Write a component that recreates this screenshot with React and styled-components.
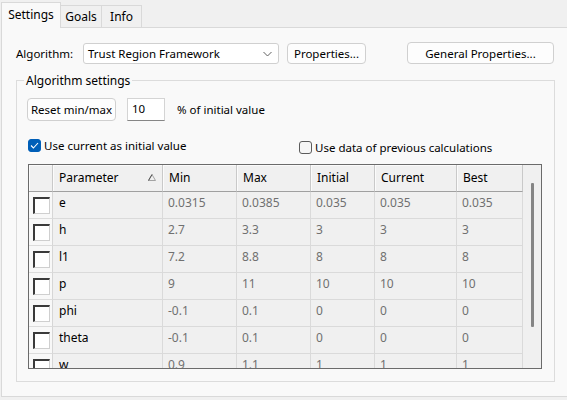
import styled, { createGlobalStyle } from "styled-components";

const GlobalStyle = createGlobalStyle`
  html, body {
    margin: 0;
    padding: 0;
    background: #f0f0f0;
  }
  body {
    font-family: "Noto Sans", "Open Sans", sans-serif;
    font-size: 11.5px;
    color: #000;
  }
`;

const Window = styled.div`
  width: 567px;
  height: 400px;
  overflow: hidden;
  background: #f0f0f0;
  padding: 2px 0 0 1px;
  box-sizing: border-box;
`;

const TabBar = styled.div`
  display: flex;
  align-items: flex-end;
  height: 25px;
`;

const Tab = styled.div`
  position: relative;
  box-sizing: border-box;
  display: flex;
  align-items: center;
  justify-content: center;
  width: ${(p) => p.w}px;
  height: ${(p) => (p.active ? 26 : 22)}px;
  margin-bottom: ${(p) => (p.active ? -1 : 0)}px;
  z-index: ${(p) => (p.active ? 1 : 0)};
  background: ${(p) => (p.active ? "#f9f9f9" : "#f0f0f0")};
  border: 1px solid #d9d9d9;
  border-bottom: none;
  border-left: ${(p) => (p.first ? "1px solid #d9d9d9" : "none")};
  padding-bottom: ${(p) => (p.active ? 3 : 0)}px;
  font-size: 12px;
`;

const Panel = styled.div`
  box-sizing: border-box;
  height: 370px;
  width: 580px;
  background: #f9f9f9;
  border: 1px solid #d9d9d9;
  padding: 14px 0 0 14px;
`;

const TopRow = styled.div`
  display: flex;
  align-items: center;
  height: 22px;
`;

const Label = styled.span`
  width: 67px;
  white-space: nowrap;
`;

const Select = styled.div`
  box-sizing: border-box;
  width: 196px;
  height: 21px;
  margin-top: 1px;
  background: #fff;
  border: 1px solid #d0d0d0;
  border-radius: 3px;
  display: flex;
  align-items: center;
  justify-content: space-between;
  padding: 0 6px 0 4px;
`;

const Button = styled.div`
  box-sizing: border-box;
  width: ${(p) => p.w}px;
  height: ${(p) => p.h || 22}px;
  margin-left: ${(p) => p.ml || 0}px;
  background: #fdfdfd;
  border: 1px solid #d0d0d0;
  border-radius: 4px;
  display: flex;
  align-items: center;
  justify-content: center;
  white-space: nowrap;
`;

const GroupBox = styled.div`
  position: relative;
  box-sizing: border-box;
  width: 539px;
  height: 302px;
  margin-top: 16px;
  border: 1px solid #dcdcdc;
  padding: 17px 0 0 10px;
`;

const Legend = styled.span`
  position: absolute;
  top: -9px;
  left: 7px;
  padding: 0 2px;
  background: #f9f9f9;
  font-size: 12px;
`;

const ResetRow = styled.div`
  display: flex;
  align-items: center;
  height: 23px;
`;

const NumberInput = styled.div`
  box-sizing: border-box;
  width: 38px;
  height: 23px;
  margin-left: 11px;
  background: #fff;
  border: 1px solid #d4d4d4;
  border-bottom-color: #868686;
  padding: 2px 0 0 4px;
`;

const Hint = styled.span`
  margin-left: 12px;
`;

const CheckRow = styled.div`
  display: flex;
  align-items: center;
  height: 17px;
  margin-top: 16px;
  padding-left: 1px;
`;

const CheckLabel = styled.label`
  display: flex;
  align-items: center;
  gap: 3px;
  width: ${(p) => p.w || "auto"};
  margin-top: ${(p) => p.mt || 0}px;
`;

const Box = styled.span`
  box-sizing: border-box;
  width: 13px;
  height: 13px;
  border-radius: 3px;
  background: ${(p) => (p.checked ? "#005fb8" : "#f6f6f6")};
  border: 1px solid ${(p) => (p.checked ? "#005fb8" : "#5c5c5c")};
  display: flex;
  align-items: center;
  justify-content: center;
`;

const Table = styled.div`
  box-sizing: border-box;
  width: 514px;
  height: 205px;
  margin: 10px 0 0 1px;
  border: 1px solid #6b6b6b;
  background: #f0f0f0;
  display: flex;
  overflow: hidden;
`;

const Grid = styled.div`
  display: grid;
  grid-template-columns: 24px 110px 74px 74px 64px 82px 66px;
  grid-auto-rows: 27px;
  grid-template-rows: 27px;
  align-content: start;
`;

const HeadCell = styled.div`
  box-sizing: border-box;
  display: flex;
  align-items: center;
  justify-content: space-between;
  padding: 0 6px 2px 6px;
  background: #f0f0f0;
  border-right: 1px solid #c9c9c9;
  border-bottom: 1px solid #a0a0a0;
  box-shadow: inset 1px 1px 0 #fbfbfb;
  font-size: 12px;
`;

const CheckCell = styled.div`
  box-sizing: border-box;
  background: #f8f8f8;
  border-right: 1px solid #d6d6d6;
  border-bottom: 1px solid #dcdcdc;
  padding: 5px 0 0 4px;
`;

const CellBox = styled.span`
  display: block;
  box-sizing: border-box;
  width: 17px;
  height: 17px;
  background: #fff;
  border-top: 2px solid #3a3a3a;
  border-left: 2px solid #3a3a3a;
  border-right: 1px solid #cfcfcf;
  border-bottom: 1px solid #cfcfcf;
`;

const Cell = styled.div`
  box-sizing: border-box;
  padding: 2px 0 0 ${(p) => (p.name ? 6 : 5)}px;
  color: ${(p) => (p.name ? "#000" : "#707070")};
  font-size: 12px;
  border-right: 1px solid #dadada;
  border-bottom: 1px solid #dadada;
  white-space: nowrap;
`;

const ScrollTrack = styled.div`
  width: 18px;
  flex-shrink: 0;
  display: flex;
  justify-content: center;
  padding-top: 18px;
  box-sizing: border-box;
`;

const Thumb = styled.div`
  width: 3px;
  height: 144px;
  background: #858585;
  border-radius: 1px;
`;

const rows = [
  ["e", "0.0315", "0.0385", "0.035", "0.035", "0.035"],
  ["h", "2.7", "3.3", "3", "3", "3"],
  ["l1", "7.2", "8.8", "8", "8", "8"],
  ["p", "9", "11", "10", "10", "10"],
  ["phi", "-0.1", "0.1", "0", "0", "0"],
  ["theta", "-0.1", "0.1", "0", "0", "0"],
  ["w", "0.9", "1.1", "1", "1", "1"],
];

const headers = ["Min", "Max", "Initial", "Current", "Best"];

export default function App() {
  return (
    <Window>
      <GlobalStyle />
      <TabBar>
        <Tab active first w={60}>Settings</Tab>
        <Tab w={41}>Goals</Tab>
        <Tab w={40}>Info</Tab>
      </TabBar>
      <Panel>
        <TopRow>
          <Label>Algorithm:</Label>
          <Select>
            <span>Trust Region Framework</span>
            <svg width="9" height="6" viewBox="0 0 9 6">
              <path d="M0.5 1 L4.5 5 L8.5 1" fill="none" stroke="#606060" strokeWidth="1" />
            </svg>
          </Select>
          <Button w={79} h={21} ml={8}>Properties...</Button>
          <Button w={147} ml={41}>General Properties...</Button>
        </TopRow>
        <GroupBox>
          <Legend>Algorithm settings</Legend>
          <ResetRow>
            <Button w={89} h={23}>Reset min/max</Button>
            <NumberInput>10</NumberInput>
            <Hint>% of initial value</Hint>
          </ResetRow>
          <CheckRow>
            <CheckLabel w="271px">
              <Box checked>
                <svg width="9" height="7" viewBox="0 0 9 7">
                  <path d="M1 3.5 L3.4 6 L8 1" fill="none" stroke="#fff" strokeWidth="1.1" />
                </svg>
              </Box>
              Use current as initial value
            </CheckLabel>
            <CheckLabel mt={3}>
              <Box />
              Use data of previous calculations
            </CheckLabel>
          </CheckRow>
          <Table>
            <Grid>
              <HeadCell />
              <HeadCell>
                Parameter
                <svg width="8" height="7" viewBox="0 0 8 7">
                  <path d="M4 0.5 L7.5 6.5 L0.5 6.5 Z" fill="none" stroke="#9a9a9a" strokeWidth="0.9" />
                  <path d="M4 0.5 L0.5 6.5" fill="none" stroke="#505050" strokeWidth="1" />
                </svg>
              </HeadCell>
              {headers.map((h) => (
                <HeadCell key={h}>{h}</HeadCell>
              ))}
              {rows.map((r) => [
                <CheckCell key={r[0] + "c"}>
                  <CellBox />
                </CheckCell>,
                ...r.map((v, i) => (
                  <Cell key={r[0] + i} name={i === 0}>
                    {v}
                  </Cell>
                )),
              ])}
            </Grid>
            <ScrollTrack>
              <Thumb />
            </ScrollTrack>
          </Table>
        </GroupBox>
      </Panel>
    </Window>
  );
}
